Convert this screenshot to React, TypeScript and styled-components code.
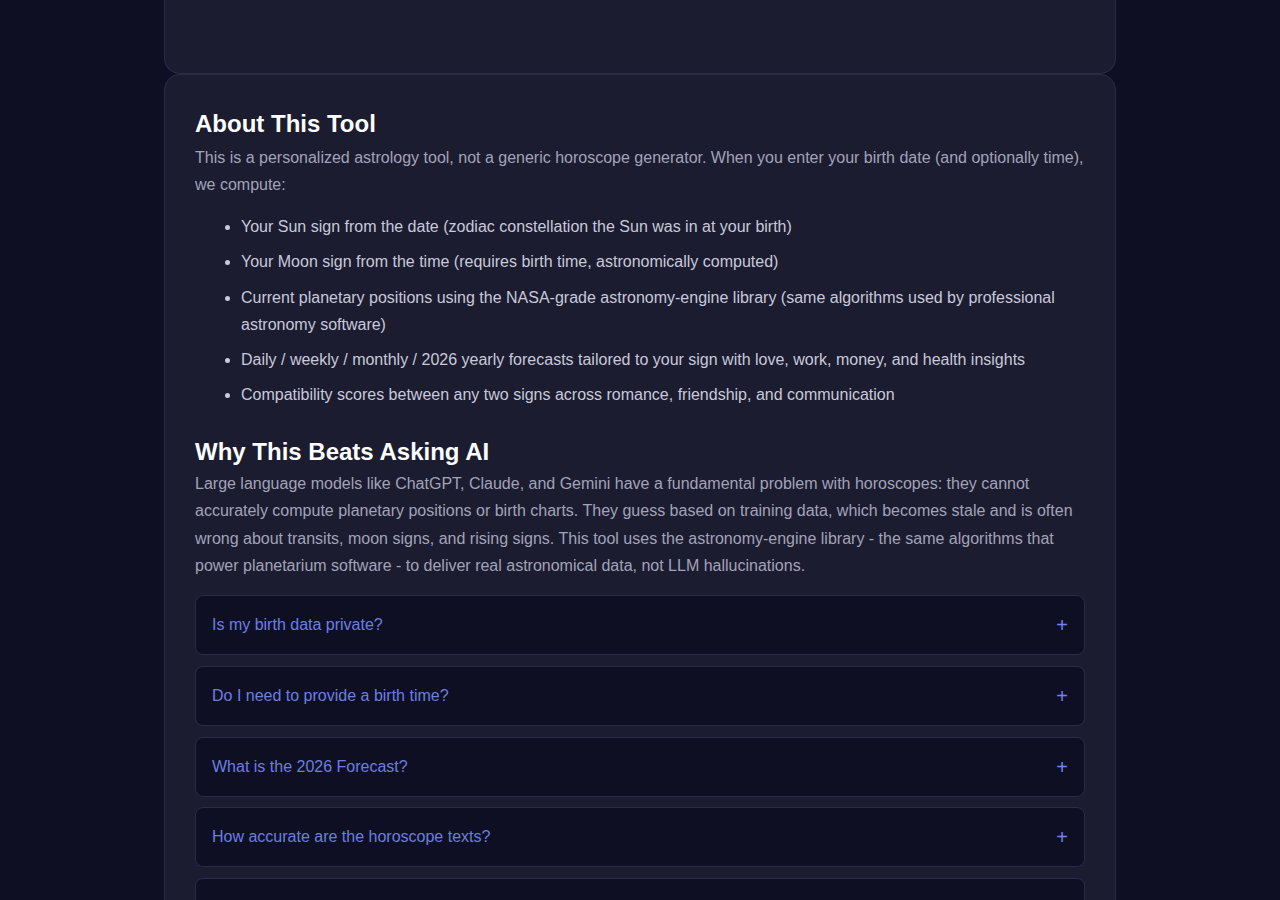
import React from "react";
import styled, { createGlobalStyle } from "styled-components";

const Global = createGlobalStyle`
  html, body { margin: 0; padding: 0; background: #0f0f23; }
  body { font-family: "Liberation Sans", Arial, sans-serif; }
  * { box-sizing: border-box; }
`;

const Page = styled.div`
  width: 952px;
  margin: 0 auto;
  display: flex;
  flex-direction: column;
`;

const TopCard = styled.section`
  height: 74px;
  background: #1b1c30;
  border: 1px solid #2a2b4a;
  border-top: none;
  border-radius: 0 0 16px 16px;
`;

const Card = styled.section`
  background: #1b1c30;
  border: 1px solid #2a2b4a;
  border-radius: 16px;
  padding: 35px 30px 30px;
`;

const Heading = styled.h2<{ $first?: boolean }>`
  margin: ${(p) => (p.$first ? "0 0 5px" : "30px 0 3px")};
  font-size: 24px;
  line-height: 28.8px;
  font-weight: 700;
  color: #ffffff;
`;

const Para = styled.p`
  margin: 0 0 15px;
  font-size: 16px;
  line-height: 27.2px;
  color: #a3a3b8;
`;

const List = styled.ul`
  margin: 0;
  padding-left: 46px;
`;

const Item = styled.li`
  font-size: 16px;
  line-height: 27.2px;
  color: #c9c9da;
  margin-bottom: 8px;
`;

const Faq = styled.div`
  margin-top: 16px;
  display: flex;
  flex-direction: column;
  gap: 10.75px;
`;

const FaqItem = styled.div`
  background: #0f0f23;
  border: 1px solid #2a2b4a;
  border-radius: 8px;
  padding: 17px 16px;
  display: flex;
  align-items: center;
  justify-content: space-between;
  min-height: 60px;
`;

const Question = styled.span`
  font-size: 16px;
  line-height: 24px;
  color: #6b7fe0;
`;

const Plus = styled.span`
  font-size: 20px;
  line-height: 24px;
  color: #7083f0;
`;

const items = [
  "Your Sun sign from the date (zodiac constellation the Sun was in at your birth)",
  "Your Moon sign from the time (requires birth time, astronomically computed)",
  "Current planetary positions using the NASA-grade astronomy-engine library (same algorithms used by professional astronomy software)",
  "Daily / weekly / monthly / 2026 yearly forecasts tailored to your sign with love, work, money, and health insights",
  "Compatibility scores between any two signs across romance, friendship, and communication",
];

const faqs = [
  "Is my birth data private?",
  "Do I need to provide a birth time?",
  "What is the 2026 Forecast?",
  "How accurate are the horoscope texts?",
  "Is this tool free?",
];

export default function App() {
  return (
    <>
      <Global />
      <Page>
        <TopCard />
        <Card>
          <Heading $first>About This Tool</Heading>
          <Para>
            This is a personalized astrology tool, not a generic horoscope generator. When you enter your birth date
            (and optionally time), we compute:
          </Para>
          <List>
            {items.map((t) => (
              <Item key={t}>{t}</Item>
            ))}
          </List>
          <Heading>Why This Beats Asking AI</Heading>
          <Para>
            Large language models like ChatGPT, Claude, and Gemini have a fundamental problem with horoscopes: they
            cannot accurately compute planetary positions or birth charts. They guess based on training data, which
            becomes stale and is often wrong about transits, moon signs, and rising signs. This tool uses the
            astronomy-engine library - the same algorithms that power planetarium software - to deliver real
            astronomical data, not LLM hallucinations.
          </Para>
          <Faq>
            {faqs.map((q) => (
              <FaqItem key={q}>
                <Question>{q}</Question>
                <Plus>+</Plus>
              </FaqItem>
            ))}
          </Faq>
        </Card>
      </Page>
    </>
  );
}
